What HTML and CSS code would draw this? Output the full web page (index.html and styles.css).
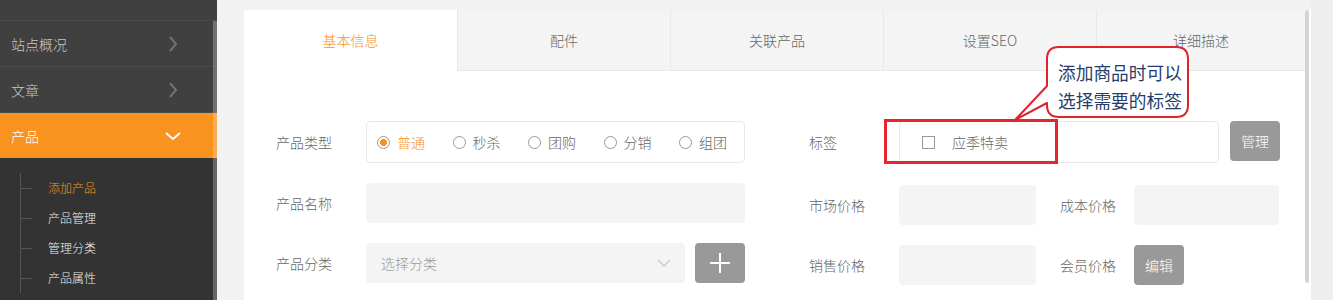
FILE: index.html
```html
<!DOCTYPE html>
<html lang="zh-CN">
  <head>
    <meta charset="UTF-8" />
    <meta name="viewport" content="width=device-width, initial-scale=1.0" />
    <title>添加产品</title>
    <link rel="stylesheet" href="styles.css">
  </head>
  <body>
    <div class="layout">
      <aside class="sidebar">
        <div class="menu-stub"></div>
        <div class="menu-item">
          <span>站点概况</span>
          <svg class="chev" width="16" height="16" viewBox="0 0 16 16"><polyline points="5,1 11,8 5,15" /></svg>
        </div>
        <div class="menu-item">
          <span>文章</span>
          <svg class="chev" width="16" height="16" viewBox="0 0 16 16"><polyline points="5,1 11,8 5,15" /></svg>
        </div>
        <div class="menu-item active">
          <span>产品</span>
          <svg class="chev" width="16" height="16" viewBox="0 0 16 16"><polyline points="1,5 8,11 15,5" /></svg>
        </div>
        <ul class="submenu">
          <li class="current">添加产品</li>
          <li>产品管理</li>
          <li>管理分类</li>
          <li>产品属性</li>
        </ul>
        <div class="side-scroll"></div>
      </aside>

      <main class="main">
        <div class="card">
          <div class="card-body">
            <ul class="tabs">
              <li class="tab active">基本信息</li>
              <li class="tab">配件</li>
              <li class="tab">关联产品</li>
              <li class="tab">设置SEO</li>
              <li class="tab">详细描述</li>
            </ul>

            <div class="form">
              <div class="col col-left">
                <div class="row row-tall">
                  <label class="label">产品类型</label>
                  <div class="radio-box">
                    <span class="radio checked"><i></i>普通</span>
                    <span class="radio"><i></i>秒杀</span>
                    <span class="radio"><i></i>团购</span>
                    <span class="radio"><i></i>分销</span>
                    <span class="radio"><i></i>组团</span>
                  </div>
                </div>
                <div class="row">
                  <label class="label">产品名称</label>
                  <div class="input wide"></div>
                </div>
                <div class="row">
                  <label class="label">产品分类</label>
                  <div class="input select">
                    <span>选择分类</span>
                    <svg width="14" height="8" viewBox="0 0 14 8"><polyline points="1,1 7,7 13,1" /></svg>
                  </div>
                  <button class="btn btn-plus">
                    <svg width="20" height="20" viewBox="0 0 20 20"><line x1="10" y1="0" x2="10" y2="20" /><line x1="0" y1="10" x2="20" y2="10" /></svg>
                  </button>
                </div>
              </div>

              <div class="col col-right">
                <div class="row row-tall row-tag">
                  <label class="label">标签</label>
                  <div class="tag-box">
                    <span class="check"></span>
                    <span>应季特卖</span>
                  </div>
                  <button class="btn btn-manage">管理</button>
                </div>
                <div class="row row-price">
                  <label class="label">市场价格</label>
                  <div class="input price"></div>
                  <label class="label label-small">成本价格</label>
                  <div class="input price-wide"></div>
                </div>
                <div class="row">
                  <label class="label">销售价格</label>
                  <div class="input price"></div>
                  <label class="label label-small">会员价格</label>
                  <button class="btn btn-edit">编辑</button>
                </div>
              </div>
            </div>
          </div>
          <div class="card-scroll"><span class="thumb"></span></div>
        </div>
      </main>
      <div class="edge"></div>
    </div>

    <!-- annotation over the form -->
    <div class="mark"></div>
    <div class="callout">
      <svg width="182" height="80" viewBox="0 0 182 80">
        <path d="M49 3 H166 Q178 3 178 15 V61 Q178 73 166 73 H49 Q37 73 37 61 V59 L5 76 L37 42 V15 Q37 3 49 3 Z" />
      </svg>
      <p class="callout-text">添加商品时可以<br />选择需要的标签</p>
    </div>
  </body>
</html>
```

FILE: styles.css
```css
* {
  box-sizing: border-box;
}
body {
  margin: 0;
  height: 300px;
  overflow: hidden;
  font-family: "Noto Sans CJK SC", "Noto Sans", sans-serif;
  font-size: 14px;
  font-weight: 300;
  color: #666;
  background-color: #f2f2f2;
}
ul {
  margin: 0;
  padding: 0;
  list-style: none;
}
.layout {
  display: flex;
  height: 300px;
}

/* sidebar */
.sidebar {
  position: relative;
  width: 217px;
  flex-shrink: 0;
  background-color: #404040;
}
.menu-stub {
  height: 21px;
  border-bottom: 1px solid #4b4b4b;
}
.menu-item {
  display: flex;
  align-items: center;
  justify-content: space-between;
  height: 46px;
  padding: 0 36px 0 11px;
  border-bottom: 1px solid #4b4b4b;
  color: #c9c9c9;
}
.menu-item .chev polyline {
  fill: none;
  stroke: #727272;
  stroke-width: 2;
}
.menu-item.active {
  height: 45px;
  background-color: #f7931e;
  border-bottom: none;
  color: #fff;
}
.menu-item.active .chev polyline {
  stroke: #fff;
}
.submenu {
  height: 142px;
  margin: 0;
  padding-top: 15px;
  background-color: #333;
}
.submenu li {
  position: relative;
  height: 30px;
  line-height: 30px;
  margin-left: 20px;
  padding-left: 27px;
  border-left: 1px solid #555;
  font-size: 12px;
  color: #f0f0f0;
}
.submenu li::before {
  content: "";
  position: absolute;
  left: 0;
  top: 15px;
  width: 11px;
  border-top: 1px solid #555;
}
.submenu li.current {
  color: #f7931e;
}
.side-scroll {
  position: absolute;
  right: 0;
  top: 21px;
  bottom: 0;
  width: 4px;
  background-color: rgba(255, 255, 255, 0.25);
}

/* main area */
.main {
  width: 1094px;
  padding: 10px 0 0 27px;
}
.edge {
  flex: 1;
  background-color: #eeeeee;
}
.card {
  display: flex;
  width: 1067px;
  height: 290px;
  background-color: #fff;
}
.card-body {
  width: 1061px;
}
.card-scroll {
  width: 6px;
}
.thumb {
  display: block;
  width: 4px;
  height: 273px;
  border-radius: 2px;
  background-color: #d4d4d4;
}

/* tabs */
.tabs {
  display: flex;
  height: 61px;
}
.tab {
  width: 213px;
  line-height: 60px;
  text-align: center;
  background-color: #f4f4f4;
  border-left: 1px solid #e8e8e8;
  border-bottom: 1px solid #e8e8e8;
  color: #666;
}
.tab:last-child {
  flex: 1;
}
.tab.active {
  background-color: #fff;
  border: none;
  color: #f7931e;
}

/* form */
.form {
  display: flex;
  gap: 64px;
  padding: 50px 0 0 32px;
}
.col {
  display: flex;
  flex-direction: column;
  gap: 20px;
}
.row {
  display: flex;
  align-items: center;
  height: 40px;
}
.row-tall {
  height: 42px;
}
.row-tag {
  margin-bottom: 2px;
}
.label {
  width: 90px;
  flex-shrink: 0;
  color: #666;
}
.label-small {
  width: 74px;
  margin-left: 24px;
}
.radio-box {
  display: flex;
  align-items: center;
  gap: 27.5px;
  width: 379px;
  height: 42px;
  padding-left: 10px;
  border: 1px solid #e8e8e8;
  border-radius: 4px;
}
.radio {
  display: flex;
  align-items: center;
  width: 48px;
  color: #666;
}
.radio i {
  width: 13px;
  height: 13px;
  margin-right: 7px;
  border: 1px solid #999;
  border-radius: 50%;
}
.radio.checked {
  color: #f7931e;
}
.radio.checked i {
  background: radial-gradient(circle, #f7931e 3.2px, #fff 3.8px);
}
.input {
  height: 40px;
  border-radius: 4px;
  background-color: #f4f4f4;
}
.wide {
  width: 379px;
}
.select {
  display: flex;
  align-items: center;
  justify-content: space-between;
  width: 319px;
  padding: 0 14px 0 15px;
  color: #999;
}
.select polyline {
  fill: none;
  stroke: #cfcfcf;
  stroke-width: 1.6;
}
.btn {
  height: 40px;
  width: 50px;
  padding: 0;
  border: none;
  border-radius: 4px;
  background-color: #999;
  color: #fff;
  font-family: inherit;
  font-size: 14px;
  font-weight: 300;
}
.btn-plus {
  display: flex;
  align-items: center;
  justify-content: center;
  margin-left: 10px;
}
.btn-plus line {
  stroke: #fff;
  stroke-width: 2;
}
.tag-box {
  display: flex;
  align-items: center;
  width: 320px;
  height: 42px;
  padding-left: 22px;
  border: 1px solid #e8e8e8;
  border-radius: 4px;
  color: #666;
}
.check {
  width: 13px;
  height: 13px;
  margin-right: 17px;
  border: 1px solid #999;
}
.btn-manage {
  margin-left: 11px;
  align-self: flex-start;
}
.price {
  width: 137px;
}
.price-wide {
  width: 145px;
}

/* annotation */
.mark {
  position: absolute;
  left: 884px;
  top: 119px;
  width: 174px;
  height: 45px;
  border: 3px solid #e5262f;
}
.callout {
  position: absolute;
  left: 1010px;
  top: 44px;
  width: 182px;
  height: 80px;
}
.callout svg {
  display: block;
}
.callout path {
  fill: #fff;
  stroke: #e0222c;
  stroke-width: 2;
  stroke-linejoin: round;
}
.callout-text {
  position: absolute;
  left: 48px;
  top: 14px;
  margin: 0;
  font-size: 17.7px;
  font-weight: 400;
  line-height: 28px;
  color: #263d6c;
  white-space: nowrap;
}
```
